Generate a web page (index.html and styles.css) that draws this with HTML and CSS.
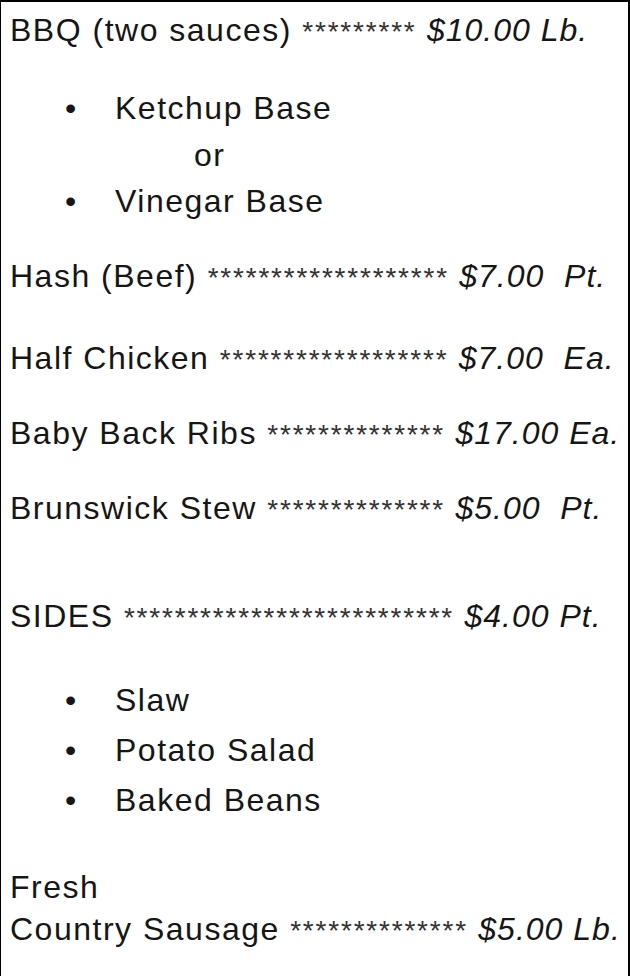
FILE: index.html
```html
<!DOCTYPE html>
<html lang="en">
<head>
  <meta charset="UTF-8">
  <meta name="viewport" content="width=device-width, initial-scale=1.0">
  <title>Menu</title>
  <link rel="stylesheet" href="styles.css">
</head>
<body>
  <div class="menu">
    <p class="item first">BBQ (two sauces) <span class="stars">*********</span> <em class="price">$10.00 Lb.</em></p>
    <ul class="choices">
      <li>Ketchup Base</li>
      <li class="or">or</li>
      <li>Vinegar Base</li>
    </ul>

    <p class="item hash">Hash (Beef) <span class="stars">*******************</span> <em class="price">$7.00&nbsp; Pt.</em></p>
    <p class="item chicken">Half Chicken <span class="stars">******************</span> <em class="price">$7.00&nbsp; Ea.</em></p>
    <p class="item">Baby Back Ribs <span class="stars">**************</span> <em class="price">$17.00 Ea.</em></p>
    <p class="item">Brunswick Stew <span class="stars">**************</span> <em class="price">$5.00&nbsp; Pt.</em></p>

    <p class="item sides">SIDES <span class="stars">**************************</span> <em class="price">$4.00 Pt.</em></p>
    <ul class="side-list">
      <li>Slaw</li>
      <li>Potato Salad</li>
      <li>Baked Beans</li>
    </ul>

    <p class="item sausage">Fresh<br>Country Sausage <span class="stars">**************</span> <em class="price">$5.00 Lb.</em></p>
  </div>
</body>
</html>
```
FILE: styles.css
```css
body {
  margin: 0;
  background: #fff;
  color: #161616;
  font-family: "Liberation Sans", Arial, sans-serif;
}
.menu {
  height: 976px;
  box-sizing: border-box;
  border-top: 2px solid #000;
  border-left: 1px solid #000;
  border-right: 2px solid #000;
  padding: 6px 0 0 9px;
  font-size: 32px;
  letter-spacing: 1.5px;
}
.item {
  margin: 31px 0 0;
  line-height: 44px;
  white-space: nowrap;
}
.item.first {
  margin-top: 0;
}
.item.hash {
  margin-top: 29px;
}
.item.chicken {
  margin-top: 38px;
}
.item.sides {
  margin-top: 64px;
}
.item.sausage {
  margin-top: 41px;
  line-height: 42px;
}
.stars {
  font-size: 28px;
  line-height: 1;
  letter-spacing: 1.8px;
  color: #333;
}
.price {
  font-style: italic;
  letter-spacing: 1px;
}
.choices, .side-list {
  list-style: none;
  margin: 33px 0 0;
  padding-left: 105px;
}
.choices li {
  line-height: 46.5px;
}
.side-list {
  margin-top: 37px;
}
.side-list li {
  line-height: 50px;
}
.choices li::before, .side-list li::before {
  content: "\2022";
  display: inline-block;
  width: 50px;
  margin-left: -50px;
}
.choices li.or {
  padding-left: 79px;
}
.choices li.or::before {
  content: none;
}
```
